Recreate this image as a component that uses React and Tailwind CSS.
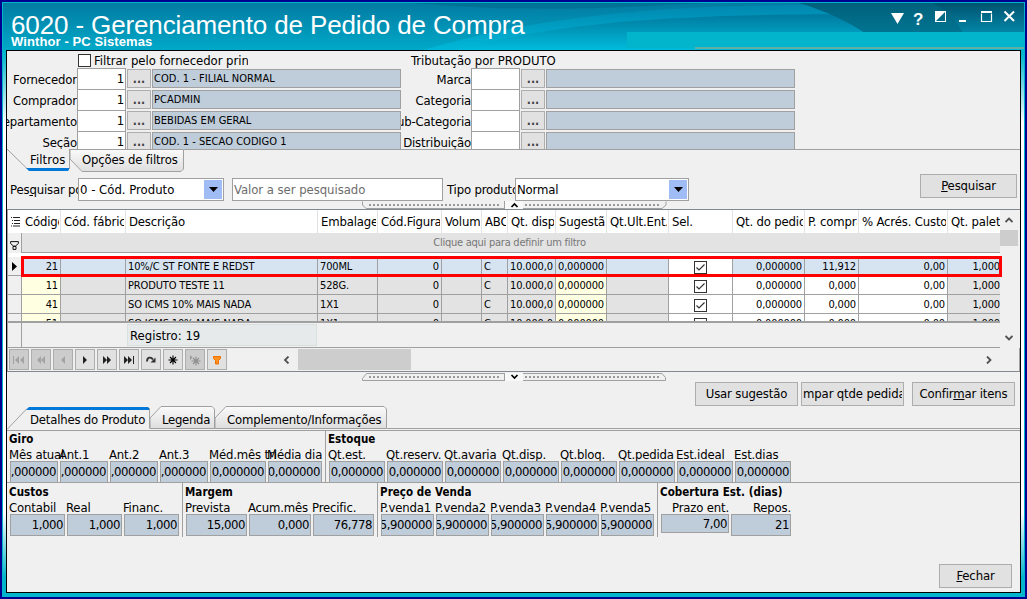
import { useState } from 'react';

const columns = [
    { key: 'codigo', title: 'Código', width: 'w-[39px]', align: 'right', bg: 'bg-[#ffffe1]' },
    { key: 'fabrica', title: 'Cód. fábrica', width: 'w-[65px]', align: 'left', bg: 'bg-[#e3e3e3]' },
    { key: 'descricao', title: 'Descrição', width: 'w-[192px]', align: 'left', bg: 'bg-[#e3e3e3]' },
    { key: 'embalagem', title: 'Embalagem', width: 'w-[60px]', align: 'left', bg: 'bg-[#e3e3e3]' },
    { key: 'figura', title: 'Cód.Figura', width: 'w-[64px]', align: 'right', bg: 'bg-[#e3e3e3]' },
    { key: 'volume', title: 'Volume', width: 'w-[40px]', align: 'right', bg: 'bg-[#e3e3e3]' },
    { key: 'abc', title: 'ABC', width: 'w-[26px]', align: 'left', bg: 'bg-[#e3e3e3]' },
    { key: 'disp', title: 'Qt. disp.', width: 'w-[48px]', align: 'left', bg: 'bg-[#e3e3e3]' },
    { key: 'sugestao', title: 'Sugestão', width: 'w-[51px]', align: 'right', bg: 'bg-[#ffffe1]' },
    { key: 'ultEnt', title: 'Qt.Ult.Ent.', width: 'w-[62px]', align: 'right', bg: 'bg-[#e3e3e3]' },
    { key: 'sel', title: 'Sel.', width: 'w-[64px]', align: 'center', bg: 'bg-white' },
    { key: 'pedido', title: 'Qt. do pedido', width: 'w-[72px]', align: 'right', bg: 'bg-white' },
    { key: 'compra', title: 'P. compra', width: 'w-[54px]', align: 'right', bg: 'bg-white' },
    { key: 'acrescimo', title: '% Acrés. Custo', width: 'w-[89px]', align: 'right', bg: 'bg-white' },
    { key: 'palete', title: 'Qt. palete', width: 'w-[52px]', align: 'palete', bg: 'bg-[#e3e3e3]' },
];

const base = { fabrica: '', figura: '0', volume: '', abc: 'C', disp: '10.000,0', sugestao: '0,000000', ultEnt: '', pedido: '0,000000', acrescimo: '0,00', palete: '1,000' };

const rows = [
    { ...base, codigo: '21', descricao: '10%/C ST FONTE E REDST', embalagem: '700ML', compra: '11,912' },
    { ...base, codigo: '11', descricao: 'PRODUTO TESTE 11', embalagem: '528G.', compra: '0,000' },
    { ...base, codigo: '41', descricao: 'SO ICMS 10% MAIS NADA', embalagem: '1X1', compra: '0,000' },
    { ...base, codigo: '51', descricao: 'SO ICMS 10% MAIS NADA', embalagem: '1X1', compra: '0,000' },
];

const alignClass = {
    left: 'justify-start pl-[2px]',
    right: 'justify-end pr-[2px]',
    center: 'justify-center',
    palete: 'justify-end pr-0',
};

const leftFilters = [
    { label: 'Fornecedor', value: 'COD. 1 - FILIAL NORMAL' },
    { label: 'Comprador', value: 'PCADMIN' },
    { label: 'Departamento', value: 'BEBIDAS EM GERAL' },
    { label: 'Seção', value: 'COD. 1 - SECAO CODIGO 1' },
];

const rightFilters = ['Marca', 'Categoria', 'Sub-Categoria', 'Distribuição'];

const navIcons = [
    { name: 'first', off: true, d: 'M3 5v8h1V5zM9 5v8L5 9zM14 5v8l-4-4z' },
    { name: 'prevPage', off: true, d: 'M9 5v8L5 9zM13 5v8L9 9z' },
    { name: 'prev', off: true, d: 'M11 5v8L7 9z' },
    { name: 'next', d: 'M7 5v8l4-4z' },
    { name: 'nextPage', d: 'M5 5v8l4-4zM9 5v8l4-4z' },
    { name: 'last', d: 'M4 5v8l4-4zM8 5v8l4-4zM13 5v8h1V5z' },
];

/* ---------- Componentes básicos ---------- */

function Button({ children, className = '' }) {
    return (
        <button type="button" className={`flex h-6 shrink-0 items-center justify-center overflow-hidden border border-[#adadad] bg-[#e1e1e1] tracking-[-0.15px] whitespace-nowrap ${className}`}>
            {children}
        </button>
    );
}

function Check() {
    return (
        <span className="flex h-[13px] w-[13px] shrink-0 border border-[#333] bg-white">
            <svg viewBox="0 0 11 11" className="h-[11px] w-[11px]">
                <path d="M1.5 5.5 4 8 9.5 2.5" fill="none" stroke="#333" strokeWidth="1.2" />
            </svg>
        </span>
    );
}

function Combo({ value, className }) {
    return (
        <div className={`flex h-[23px] shrink-0 items-center border border-[#a0a0a0] bg-white p-px pl-px ${className}`}>
            <span className="flex-1 overflow-hidden whitespace-nowrap">{value}</span>
            <span className="flex h-[19px] w-[18px] items-center justify-center bg-[#a0bcf5]">
                <svg viewBox="0 0 9 5" className="h-[5px] w-[9px]"><path d="M0 0h9L4.500 5z" /></svg>
            </span>
        </div>
    );
}

function LookupRow({ label, code, value }) {
    return (
        <div className="flex h-[21px] shrink-0">
            <div className="flex h-[22px] w-[71px] justify-end overflow-hidden pt-[3px] leading-[18px] whitespace-nowrap">{label}</div>
            <div className="h-[22px] w-[49px] shrink-0 border border-[#a0a0a0] bg-white pr-px text-right leading-5">{code}</div>
            <div className="mt-px ml-px h-[19px] w-6 shrink-0 border border-[#adadad] bg-[#e1e1e1] text-center text-[12px] leading-[18px] font-bold tracking-normal text-[#444]">...</div>
            <div className="mt-px ml-px h-[19px] w-[249px] shrink-0 border border-[#a0a0a0] bg-[#bfccda] pl-px text-[11px] leading-[17px] tracking-[0.03px]">{value}</div>
        </div>
    );
}

function Splitter({ down }) {
    return (
        <svg viewBox="0 0 305 8" className="ml-[355px] h-2 w-[305px] shrink-0">
            <path d={down ? 'M.5 7.500V5.500L4.500.5H143M161 .5H300L303.500 4.500V7.500H161M143 7.500H.5' : 'M.5 .5V4L4 7.500H143M161 7.500H300L304 4V.5'} fill="none" stroke="#a0a0a0" />
            <path d="M7 4H138M163 4H299" stroke="#999" strokeWidth="2" strokeDasharray="2 2" />
            <rect x="143" y="0" width="18" height="8" fill="#f8f8f8" />
            <path d="M142.500 0V8" stroke="#a0a0a0" />
            <path d={down ? 'M149.500 2 152.500 5 155.500 2' : 'M149.500 6 152.500 3 155.500 6'} fill="none" stroke="#000" strokeWidth="1.700" />
        </svg>
    );
}

function Chevron({ d, className }) {
    return (
        <svg viewBox="0 0 8 8" className={`h-2 w-2 shrink-0 ${className}`}>
            <path d={d} fill="none" stroke="#505050" strokeWidth="1.800" />
        </svg>
    );
}

function Field({ label, value, width, className = '', labelClass = '' }) {
    return (
        <div className={`flex shrink-0 flex-col ${width}`}>
            <span className={`-ml-px flex h-[15px] leading-[17px] whitespace-nowrap ${labelClass}`}>{label}</span>
            <span className={`flex items-center justify-end overflow-hidden border border-[#a0a0a0] bg-[#bfccda] pr-px tracking-[-0.45px] whitespace-nowrap ${className || 'h-[22px]'}`}>{value}</span>
        </div>
    );
}

function Group({ title, className, children }) {
    return (
        <section className={`flex shrink-0 flex-col ${className}`}>
            <h3 className="-ml-px text-[11.5px] leading-[13px] font-bold tracking-[0.05px] whitespace-nowrap">{title}</h3>
            <div className="flex gap-[2px]">{children}</div>
        </section>
    );
}

/* ---------- Barra de título ---------- */

function TitleBar() {
    return (
        <header className="relative h-[47px] shrink-0 overflow-hidden text-white">
            <svg viewBox="0 0 1021 47" className="absolute inset-0 h-[47px] w-[1021px]">
                <defs>
                    <linearGradient id="sky" x1="0" y1="0" x2="0" y2="1">
                        <stop offset="0" stopColor="#037ba2" />
                        <stop offset="1" stopColor="#00a9c8" />
                    </linearGradient>
                    <linearGradient id="light" x1="0" y1="0" x2="0" y2="1">
                        <stop offset="0" stopColor="#0087b0" />
                        <stop offset="1" stopColor="#00bcdc" />
                    </linearGradient>
                    <linearGradient id="wave" x1="0" y1="0" x2="0" y2="1">
                        <stop offset="0" stopColor="#007398" />
                        <stop offset="1" stopColor="#00bcdc" />
                    </linearGradient>
                    <linearGradient id="deep" x1="0" y1="0" x2="0" y2="1">
                        <stop offset="0" stopColor="#00536f" />
                        <stop offset="1" stopColor="#0387a8" />
                    </linearGradient>
                </defs>
                <rect width="1021" height="47" fill="url(#sky)" />
                <path d="M410 0C520 10 620 5 700 0Z" fill="#016788" opacity=".45" />
                <path d="M420 47C560 6 700 2 830 2L1021 0V47Z" fill="url(#light)" opacity=".8" />
                <path d="M450 47C580 14 700 8 1021 12V47Z" fill="url(#wave)" opacity=".8" />
                <path d="M797 0C825 9 842 17 862 30H1021V0Z" fill="url(#deep)" />
                <path d="M797 0H930C945 8 953 17 960 30H862C842 17 825 9 797 0Z" fill="#026984" opacity=".6" />
                <rect x="624" y="29" width="397" height="16" fill="#02b5cc" />
                <rect x="692" y="44" width="329" height="2" fill="#61afa2" />
            </svg>
            <div className="relative flex justify-between font-['Liberation_Sans',Arial,sans-serif]">
                <div className="pl-2">
                    <h1 className="pt-[7px] text-[26px] leading-[31px] tracking-[-0.13px] whitespace-nowrap">6020 - Gerenciamento de Pedido de Compra</h1>
                    <p className="-mt-[6px] text-[13px] leading-[14px] font-bold tracking-[0.1px] whitespace-nowrap">Winthor - PC Sistemas</p>
                </div>
                <svg viewBox="0 0 130 24" className="mt-[3px] mr-[3px] h-6 w-[130px]">
                    <path d="M0 7H13L6.500 18Z" fill="#fff" />
                    <text x="22" y="18.500" fill="#fff" fontSize="17" fontWeight="bold">?</text>
                    <rect x="44.500" y="5.500" width="10" height="10" fill="none" stroke="#fff" />
                    <path d="M44 5H55L44 16Z" fill="#fff" />
                    <path d="M68 15H75" stroke="#fff" strokeWidth="2" />
                    <path d="M90.500 7.500V15.500H100.500V7.500" fill="none" stroke="#fff" strokeWidth="1.200" />
                    <path d="M90 6H101" stroke="#fff" strokeWidth="2" />
                    <path d="M113.500 5.500 123 15M123 5.500 113.500 15" stroke="#fff" strokeWidth="2" />
                </svg>
            </div>
        </header>
    );
}

/* ---------- Grid de produtos ---------- */

function ProductGrid({ selected, setSelected }) {
    return (
        <div className="flex h-[163px] shrink-0 flex-col border-y border-[#828790] bg-white">
            <div className="flex h-[138px] shrink-0 overflow-hidden">
                <div className="flex w-[993px] shrink-0 flex-col overflow-hidden border-l border-[#a0a0a0]">
                    <div className="flex h-[23px] shrink-0 items-center overflow-hidden">
                        <div className="flex w-[14px] shrink-0 justify-center">
                            <svg viewBox="0 0 9 11" className="h-[11px] w-[9px]">
                                <path d="M0 1.500H1M2 1.500H9M1 4.500H2M3 4.500H9M1 7.500H2M3 7.500H9M0 10H1M2 10H9" stroke="#222" />
                            </svg>
                        </div>
                        {columns.map((col) => (
                            <div key={col.key} className={`flex h-full shrink-0 items-center border-r border-[#e3e3e3] pt-px pr-px pl-[3px] last:border-r-0 last:pr-0 ${col.width}`}>
                                <span className="overflow-hidden whitespace-nowrap">{col.title}</span>
                            </div>
                        ))}
                    </div>
                    <div className="flex h-5 shrink-0">
                        <div className="flex w-[14px] items-center justify-center border-r border-[#a0a0a0] bg-[#f0f0f0] pt-1">
                            <svg viewBox="0 0 9 9" className="h-[9px] w-[9px]">
                                <path d="M.6.6H8.400V2.500L5.500 5H3.500L.6 2.500ZM3 5.500H6V8.400H3Z" fill="none" stroke="#111" />
                            </svg>
                        </div>
                        <div className="flex flex-1 items-center justify-center border-b border-[#a0a0a0] bg-[#e3e3e3] pt-px pr-[3px] text-[11px] tracking-[-0.25px] text-[#777]">Clique aqui para definir um filtro</div>
                    </div>
                    <div className="h-1 shrink-0" />
                    <div className="h-[66px] shrink-0 overflow-hidden border-b-2 border-[#a0a0a0]">
                        {rows.map((row, i) => (
                            <div key={row.codigo} onClick={() => setSelected(i)} className="flex h-[19px] text-[11px] tracking-[-0.15px]">
                                <div className="flex w-[14px] shrink-0 items-center justify-center border-r border-b border-[#a0a0a0] bg-[#f0f0f0]">
                                    {selected === i && <svg viewBox="0 0 5 9" className="h-[9px] w-[5px]"><path d="M0 0V9L5 4.500Z" /></svg>}
                                </div>
                                {columns.map((col) => (
                                    <div
                                        key={col.key}
                                        className={`flex shrink-0 items-center overflow-hidden border-r border-b border-[#a0a0a0] pt-[2px] whitespace-nowrap last:border-r-0 ${col.width} ${alignClass[col.align]} ${selected === i && col.key !== 'sel' ? 'bg-[#d6e4f2]' : col.bg}`}
                                    >
                                        {col.key === 'sel' ? <Check /> : row[col.key]}
                                    </div>
                                ))}
                            </div>
                        ))}
                    </div>
                    <div className="flex h-[25px] shrink-0 border-b border-[#a0a0a0] bg-[#f0f0f0]">
                        <div className="w-[14px] border-r border-[#a0a0a0]" />
                        <div className="mt-px ml-[105px] flex h-[22px] w-[190px] items-center border border-[#dadfe0] bg-[#e6eaeb] pt-px pl-[2px] tracking-normal">Registro: 19</div>
                    </div>
                </div>
                <div className="flex flex-1 flex-col items-center border-r border-[#a0a0a0] bg-[#f0f0f0] pr-[2px]">
                    <Chevron d="M.5 6 4 2.500 7.500 6" className="mt-[6px]" />
                    <div className="mt-[6px] h-4 w-[18px] shrink-0 bg-[#cdcdcd]" />
                    <Chevron d="M.5 2 4 5.500 7.500 2" className="mt-[88px]" />
                </div>
            </div>
            <div className="flex flex-1 items-center border-x border-[#a0a0a0] bg-[#f0f0f0]">
                <div className="flex gap-[2px] pl-px">
                    {navIcons.map((icon) => (
                        <span key={icon.name} className={`flex h-[21px] w-5 items-center justify-center border border-[#adadad] ${icon.off ? 'bg-[#cccccc]' : 'bg-[#e1e1e1]'}`}>
                            <svg viewBox="0 0 18 18" className="h-[18px] w-[18px]"><path d={icon.d} fill={icon.off ? '#a3a3a3' : '#222'} /></svg>
                        </span>
                    ))}
                    <span className="flex h-[21px] w-5 items-center justify-center border border-[#adadad] bg-[#e1e1e1]">
                        <svg viewBox="0 0 18 18" className="h-[18px] w-[18px]">
                            <path d="M5 10.500C5 6 9 5.500 11 8.500" fill="none" stroke="#333" strokeWidth="1.800" />
                            <path d="M13.500 6.500V11.500H8.500Z" fill="#333" />
                        </svg>
                    </span>
                    <span className="flex h-[21px] w-5 items-center justify-center border border-[#adadad] bg-[#e1e1e1]">
                        <svg viewBox="0 0 18 18" className="h-[18px] w-[18px]">
                            <path d="M9 4.500V13.500M4.500 9H13.500M6 6 12 12M12 6 6 12" stroke="#000" strokeWidth="1.100" />
                        </svg>
                    </span>
                    <span className="flex h-[21px] w-5 items-center justify-center border border-[#adadad] bg-[#cccccc]">
                        <svg viewBox="0 0 18 18" className="h-[18px] w-[18px]">
                            <path d="M4 4V9L6.500 6.500Z" fill="#999" />
                            <path d="M10 5.500V14.500M5.500 10H14.500M7 7 13 13M13 7 7 13" stroke="#8f8f8f" strokeWidth="1.100" />
                        </svg>
                    </span>
                    <span className="flex h-[21px] w-5 items-center justify-center border border-[#adadad] bg-[#e1e1e1]">
                        <svg viewBox="0 0 18 18" className="h-[18px] w-[18px]">
                            <path d="M5.500 5.500H12.500V7.500L10.500 9.500V13H7.500V9.500L5.500 7.500Z" fill="#ff9020" stroke="#ef7100" />
                        </svg>
                    </span>
                </div>
                <Chevron d="M5.500.5 2 4 5.500 7.500" className="ml-[56px]" />
                <div className="ml-[7px] h-[21px] w-[113px] bg-[#cdcdcd]" />
                <Chevron d="M2 .5 5.500 4 2 7.500" className="mr-[26px] ml-auto" />
            </div>
        </div>
    );
}

export default function App() {
    const [selected, setSelected] = useState(0);
    const [filterOnly, setFilterOnly] = useState(false);

    return (
        <div className="flex h-[599px] w-[1027px] flex-col overflow-hidden border-2 border-[#000090] font-['DejaVu_Sans_Condensed','DejaVu_Sans',sans-serif] text-[13px] tracking-[-0.17px] text-black">
            <div className="relative flex h-[595px] flex-col border border-[#00b5cc] bg-[linear-gradient(to_bottom,#00b5cc_50px,#ffffff_120px,#ffffff_510px,#00b5cc_575px)]">
                <TitleBar />
                <main className="mr-[3px] ml-[3px] flex h-[543px] flex-col border border-black bg-[#f0f0f0]">

                    {/* Filtros superiores */}
                    <div className="flex h-[98px] shrink-0 overflow-hidden">
                        <div className="flex w-[394px] shrink-0 flex-col">
                            <div className="flex h-[17px] shrink-0 items-start pt-[3px] pl-[71px]">
                                <button type="button" onClick={() => setFilterOnly(!filterOnly)} className="h-[13px] w-[13px] shrink-0 border border-[#333] bg-white" />
                                <span className="ml-[3px] w-[154px] overflow-hidden leading-[14px] tracking-[-0.05px] whitespace-nowrap">Filtrar pelo fornecedor prin</span>
                            </div>
                            {leftFilters.map((f) => (
                                <LookupRow key={f.label} label={f.label} code="1" value={f.value} />
                            ))}
                        </div>
                        <div className="flex w-[394px] shrink-0 flex-col">
                            <div className="h-[17px] shrink-0 pt-[3px] pl-[10px] leading-[14px] tracking-[-0.05px]">Tributação por PRODUTO</div>
                            {rightFilters.map((label) => (
                                <LookupRow key={label} label={label} code="" value="" />
                            ))}
                        </div>
                    </div>

                    {/* Abas de filtros */}
                    <div className="flex h-[24px] shrink-0">
                        <div className="flex h-[23px] w-[63px] shrink-0">
                            <svg viewBox="0 0 63 23" className="absolute h-[23px] w-[63px]">
                                <path d="M0 0 20 19.500M62.500 0V20" fill="none" stroke="#a0a0a0" />
                                <path d="M19 19H62V20.500L61 22H22Z" fill="#0078d7" />
                            </svg>
                            <span className="relative pt-[2px] pl-[23px] leading-[18px] tracking-[0.1px]">Filtros</span>
                        </div>
                        <div className="flex h-[23px] w-[114px] shrink-0">
                            <svg viewBox="0 0 114 23" className="absolute h-[23px] w-[114px]">
                                <defs>
                                    <linearGradient id="tab" x1="0" y1="0" x2="0" y2="1">
                                        <stop offset="0" stopColor="#fafafa" />
                                        <stop offset="1" stopColor="#dedede" />
                                    </linearGradient>
                                </defs>
                                <path d="M0 10 12 22.500H111L113.500 20V.5H0Z" fill="url(#tab)" stroke="#a0a0a0" />
                            </svg>
                            <span className="relative pt-[2px] pl-[12px] leading-[18px] whitespace-nowrap">Opções de filtros</span>
                        </div>
                        <div className="flex-1 border-t border-[#a0a0a0]" />
                    </div>

                    {/* Pesquisa */}
                    <div className="flex h-[28px] shrink-0 items-end">
                        <div className="w-[71px] shrink-0 overflow-hidden pl-[3px] leading-[22px] whitespace-nowrap">Pes<u>q</u>uisar por</div>
                        <Combo value="0 - Cód. Produto" className="w-[146px] tracking-normal" />
                        <div className="ml-[8px] h-[23px] w-[211px] shrink-0 border border-[#a0a0a0] bg-white pl-px leading-[21px] tracking-[-0.05px] text-[#6d6d6d]">Valor a ser pesquisado</div>
                        <div className="w-[72px] shrink-0 overflow-hidden pl-[4px] leading-[22px] whitespace-nowrap">Tipo produto</div>
                        <Combo value="Normal" className="w-[174px]" />
                        <Button className="mb-[3px] ml-auto mr-[3px] w-[97px]"><span><u>P</u>esquisar</span></Button>
                    </div>
                    <Splitter />

                    <ProductGrid selected={selected} setSelected={setSelected} />

                    <div className="pt-px"><Splitter down /></div>

                    {/* Ações do grid */}
                    <div className="flex h-[25px] shrink-0 justify-end pt-px pr-[5px]">
                        <Button className="w-[103px]">Usar sugestão</Button>
                        <Button className="ml-[3px] w-[103px] px-px"><span className="flex w-full justify-center overflow-hidden">Limpar qtde pedidas</span></Button>
                        <Button className="ml-2 w-[103px]"><span>Confir<u>m</u>ar itens</span></Button>
                    </div>

                    {/* Abas de detalhes */}
                    <div className="flex h-[25px] shrink-0 border-b border-[#a0a0a0]">
                        <div className="flex w-[143px] shrink-0">
                            <svg viewBox="0 0 143 24" className="absolute h-6 w-[143px]">
                                <path d="M0 23.500 20 2.500M142.500 2V22.500" fill="none" stroke="#a0a0a0" />
                                <path d="M19 4 22 1H141L142 2V4Z" fill="#0078d7" />
                            </svg>
                            <span className="relative pt-[5px] pl-[23px] leading-[18px] tracking-[-0.2px] whitespace-nowrap">Detalhes do Produto</span>
                        </div>
                        <div className="flex w-[65px] shrink-0">
                            <svg viewBox="0 0 65 24" className="absolute h-6 w-[65px]">
                                <path d="M0 22.500V12L11 .5H62L64.500 3V22.500Z" fill="url(#tab)" stroke="#a0a0a0" />
                            </svg>
                            <span className="relative pt-[5px] pl-[12px] leading-[18px] tracking-[-0.3px] whitespace-nowrap">Legenda</span>
                        </div>
                        <div className="flex w-[172px] shrink-0">
                            <svg viewBox="0 0 172 24" className="absolute h-6 w-[172px]">
                                <path d="M0 22.500V12L11 .5H169L171.500 3V22.500Z" fill="url(#tab)" stroke="#a0a0a0" />
                            </svg>
                            <span className="relative pt-[5px] pl-[12px] leading-[18px] whitespace-nowrap">Complemento/Informações</span>
                        </div>
                        <div className="mb-px flex-1 border-b border-[#a0a0a0]" />
                    </div>

                    {/* Giro / Estoque */}
                    <div className="flex h-[52px] shrink-0 border-b border-[#a0a0a0]">
                        <Group title="Giro" className="w-[318px] pt-[2px] pl-[3px]">
                            <Field label="Mês atual" value="0,000000" width="w-[48px]" />
                            <Field label="Ant.1" value="0,000000" width="w-[48px]" />
                            <Field label="Ant.2" value="0,000000" width="w-[48px]" />
                            <Field label="Ant.3" value="0,000000" width="w-[48px]" />
                            <Field label="Méd.mês tri" value="0,000000" width="w-[56px]" />
                            <Field label="Média dia" value="0,000000" width="w-[54px]" />
                        </Group>
                        <Group title="Estoque" className="border-l border-[#a0a0a0] pt-[2px] pl-[3px]">
                            {['Qt.est.', 'Qt.reserv.', 'Qt.avaria', 'Qt.disp.', 'Qt.bloq.', 'Qt.pedida', 'Est.ideal', 'Est.dias'].map((label) => (
                                <Field key={label} label={label} value="0,000000" width="w-[56px]" />
                            ))}
                        </Group>
                    </div>

                    {/* Custos / Margem / Preço / Cobertura */}
                    <div className="flex h-[54px] shrink-0">
                        <Group title="Custos" className="w-[175px] pt-[3px] pl-[3px]">
                            <Field label="Contabil" value="1,000" width="w-[55px]" />
                            <Field label="Real" value="1,000" width="w-[55px]" />
                            <Field label="Financ." value="1,000" width="w-[55px]" />
                        </Group>
                        <Group title="Margem" className="w-[195px] border-l border-[#a0a0a0] pt-[3px] pl-[3px]">
                            <Field label="Prevista" value="15,000" width="w-[61px]" />
                            <Field label="Acum.mês" value="0,000" width="w-[62px]" />
                            <Field label="Precific." value="76,778" width="w-[61px]" />
                        </Group>
                        <Group title="Preço de Venda" className="w-[280px] border-l border-[#a0a0a0] pt-[3px] pl-[3px]">
                            {[1, 2, 3, 4, 5].map((n) => (
                                <Field key={n} label={`P.venda${n}`} value="15,900000" width="w-[53px]" />
                            ))}
                        </Group>
                        <Group title="Cobertura Est. (dias)" className="border-l border-[#a0a0a0] pt-[3px] pl-[3px]">
                            <Field label="Prazo ent." value="7,00" width="w-[68px]" className="h-[19px]" labelClass="justify-end" />
                            <Field label="Repos." value="21" width="w-[60px]" labelClass="justify-end" />
                        </Group>
                    </div>

                    <div className="flex flex-1 items-end justify-end pr-2 pb-1">
                        <Button className="w-[73px]"><span><u>F</u>echar</span></Button>
                    </div>
                </main>

                {/* Destaque da linha selecionada */}
                <div className="pointer-events-none absolute top-[253px] left-[18px] h-[21px] w-[981px] border-3 border-[#fe0000]" />
            </div>
        </div>
    );
}
